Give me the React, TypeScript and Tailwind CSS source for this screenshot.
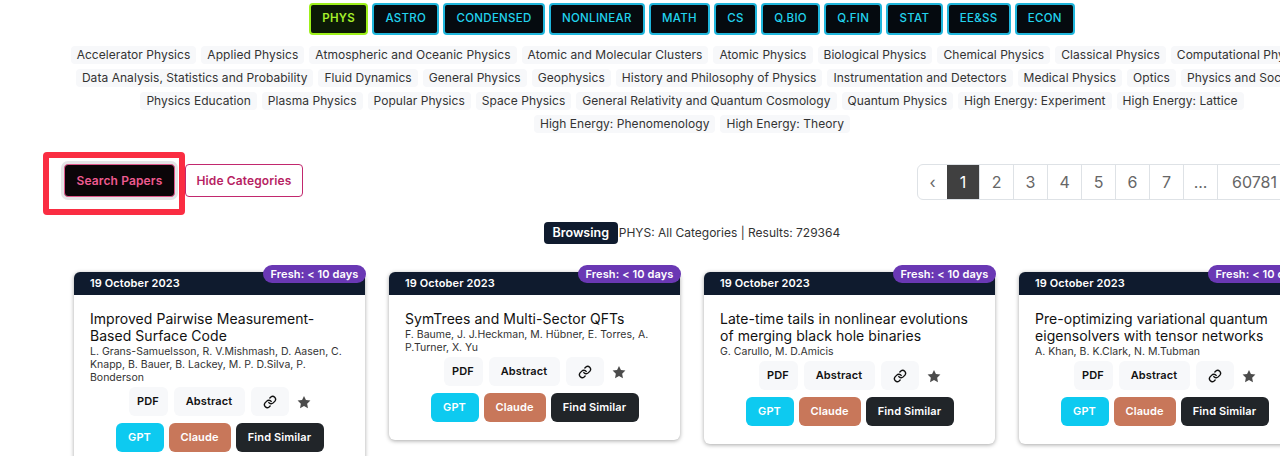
import React from "react";

const tabs = ["PHYS", "ASTRO", "CONDENSED", "NONLINEAR", "MATH", "CS", "Q.BIO", "Q.FIN", "STAT", "EE&SS", "ECON"];

const chipRows = [
  ["Accelerator Physics", "Applied Physics", "Atmospheric and Oceanic Physics", "Atomic and Molecular Clusters", "Atomic Physics", "Biological Physics", "Chemical Physics", "Classical Physics", "Computational Physics"],
  ["Data Analysis, Statistics and Probability", "Fluid Dynamics", "General Physics", "Geophysics", "History and Philosophy of Physics", "Instrumentation and Detectors", "Medical Physics", "Optics", "Physics and Society"],
  ["Physics Education", "Plasma Physics", "Popular Physics", "Space Physics", "General Relativity and Quantum Cosmology", "Quantum Physics", "High Energy: Experiment", "High Energy: Lattice"],
  ["High Energy: Phenomenology", "High Energy: Theory"],
];

const papers = [
  {
    title: "Improved Pairwise Measurement-Based Surface Code",
    authors: "L. Grans-Samuelsson, R. V.Mishmash, D. Aasen, C. Knapp, B. Bauer, B. Lackey, M. P. D.Silva, P. Bonderson",
  },
  {
    title: "SymTrees and Multi-Sector QFTs",
    authors: "F. Baume, J. J.Heckman, M. Hübner, E. Torres, A. P.Turner, X. Yu",
  },
  {
    title: "Late-time tails in nonlinear evolutions of merging black hole binaries",
    authors: "G. Carullo, M. D.Amicis",
  },
  {
    title: "Pre-optimizing variational quantum eigensolvers with tensor networks",
    authors: "A. Khan, B. K.Clark, N. M.Tubman",
  },
];

const pages = ["2", "3", "4", "5", "6", "7", "..."];

const LinkIcon = () => (
  <svg width="14" height="14" viewBox="0 0 24 24" fill="none" stroke="#111" strokeWidth="2.4" strokeLinecap="round" strokeLinejoin="round">
    <path d="M10 13a5 5 0 0 0 7.5.5l3-3a5 5 0 0 0-7-7l-1.7 1.7" />
    <path d="M14 11a5 5 0 0 0-7.5-.5l-3 3a5 5 0 0 0 7 7l1.7-1.7" />
  </svg>
);

const StarIcon = () => (
  <svg width="14" height="14" viewBox="0 0 24 24" fill="#4b4b4b">
    <path d="M12 1.5l3.3 7 7.7 1-5.6 5.3 1.4 7.7-6.8-3.7-6.8 3.7 1.4-7.7L1 9.5l7.7-1z" />
  </svg>
);

const PaperCard = ({ title, authors }: { title: string; authors: string }) => (
  <div className="relative w-[291px] shrink-0 rounded-md bg-white shadow-[0_1px_4px_rgba(0,0,0,0.35)]">
    <div className="flex h-[23px] items-center rounded-t-md bg-[#0f1b2e] px-4 text-[11px] font-semibold tracking-[0.01em] text-white">
      19 October 2023
    </div>
    <span className="absolute right-[-1px] top-[-7px] flex h-[18px] w-[103px] items-center justify-center rounded-full bg-[#6a38b4] text-[11px] font-semibold tracking-[0.01em] text-white">
      Fresh: &lt; 10 days
    </span>
    <div className="px-4 pb-[18px] pt-[15px]">
      <h3 className="text-sm font-normal leading-[17px] tracking-[0.003em] text-[#111]">{title}</h3>
      <p className="mt-px text-[10.5px] leading-[13px] text-[#333]">{authors}</p>
      <div className="mt-[3px] flex items-center justify-center gap-[6px]">
        <button className="flex h-[29px] w-[39px] items-center justify-center rounded-md bg-[#f7f8fa] text-[11px] font-semibold tracking-[0.01em] text-[#111]">PDF</button>
        <button className="flex h-[29px] w-[71px] items-center justify-center rounded-md bg-[#f7f8fa] text-[11px] font-semibold tracking-[0.01em] text-[#111]">Abstract</button>
        <button className="flex h-[29px] w-[38px] items-center justify-center rounded-md bg-[#f7f8fa]"><LinkIcon /></button>
        <span className="ml-[2px] flex w-[14px] items-center justify-center"><StarIcon /></span>
      </div>
      <div className="mt-[7px] flex items-center justify-center gap-[5px]">
        <button className="flex h-[29px] w-[48px] items-center justify-center rounded-md bg-[#0dcaf0] text-[11px] font-semibold tracking-[0.01em] text-white">GPT</button>
        <button className="flex h-[29px] w-[62px] items-center justify-center rounded-md bg-[#c8775a] text-[11px] font-semibold tracking-[0.01em] text-white">Claude</button>
        <button className="flex h-[29px] w-[88px] items-center justify-center rounded-md bg-[#212529] text-[11px] font-semibold tracking-[0.01em] text-white">Find Similar</button>
      </div>
    </div>
  </div>
);

export default function App() {
  return (
    <div className="relative h-[456px] w-[1280px] overflow-hidden bg-white font-['Inter',sans-serif]">
      <div className="w-[1384px]">
        <div className="flex justify-center gap-1 pt-[3px]">
          {tabs.map((tab, i) => (
            <button
              key={tab}
              className={
                i === 0
                  ? "flex h-8 items-center rounded border-2 border-[#9ef01a] bg-[#0c1a06] px-[11.2px] text-[11.5px] font-semibold tracking-wide text-[#a6f02a]"
                  : "flex h-8 items-center rounded border-2 border-[#1fb6dc] bg-[#050a0f] px-[11.2px] text-[11.5px] font-medium tracking-wide text-[#22d3ee]"
              }
            >
              {tab}
            </button>
          ))}
        </div>

        <div className="mt-[11px] flex flex-col gap-[5px]">
          {chipRows.map((row, i) => (
            <div key={i} className="flex justify-center gap-[5px]">
              {row.map((chip) => (
                <span key={chip} className="flex h-[18px] shrink-0 items-center whitespace-nowrap rounded bg-[#f7f8fa] px-[6px] text-xs tracking-[0.004em] text-[#333]">
                  {chip}
                </span>
              ))}
            </div>
          ))}
        </div>

        <div className="mt-[31px] flex items-start justify-between pl-[64px] pr-[94px]">
          <div className="flex items-start gap-[10px]">
            <button className="h-[33px] w-[111px] rounded border-[1.5px] border-[#e0568a] bg-[#0b0508] text-xs font-semibold tracking-[0.01em] text-[#ee5a90] shadow-[0_0_0_3px_#e4e4e6]">
              Search Papers
            </button>
            <button className="h-[33px] w-[118px] rounded border-[1.5px] border-[#c2286e] bg-white text-xs font-semibold tracking-[0.01em] text-[#b71f63]">
              Hide Categories
            </button>
          </div>
          <div className="flex h-[36px] items-stretch overflow-hidden rounded-md border border-[#dee2e6] text-base text-[#666]">
            <span className="flex w-[29px] items-center justify-center">‹</span>
            <span className="flex w-[32px] items-center justify-center bg-[#404040] text-white">1</span>
            {pages.map((page) => (
              <span key={page} className="flex w-[34px] items-center justify-center border-l border-[#dee2e6]">{page}</span>
            ))}
            <span className="flex items-center border-l border-[#dee2e6] pl-[14px] pr-3">60781</span>
          </div>
        </div>

        <div className="mt-[22px] flex items-center justify-center">
          <span className="flex h-[22px] w-[74px] items-center justify-center rounded bg-[#0f1b2e] text-[12.5px] font-semibold text-white">Browsing</span>
          <span className="ml-px text-xs text-[#333]">PHYS: All Categories | Results: 729364</span>
        </div>

        <div className="mt-[28px] flex items-start gap-6 pl-[74px]">
          {papers.map((paper) => (
            <PaperCard key={paper.title} title={paper.title} authors={paper.authors} />
          ))}
        </div>
      </div>

      {/* red annotation box drawn over the screenshot */}
      <div className="pointer-events-none absolute left-[43px] top-[152px] h-[63px] w-[142px] rounded-sm border-[6px] border-[#fa2d42]" />
    </div>
  );
}
